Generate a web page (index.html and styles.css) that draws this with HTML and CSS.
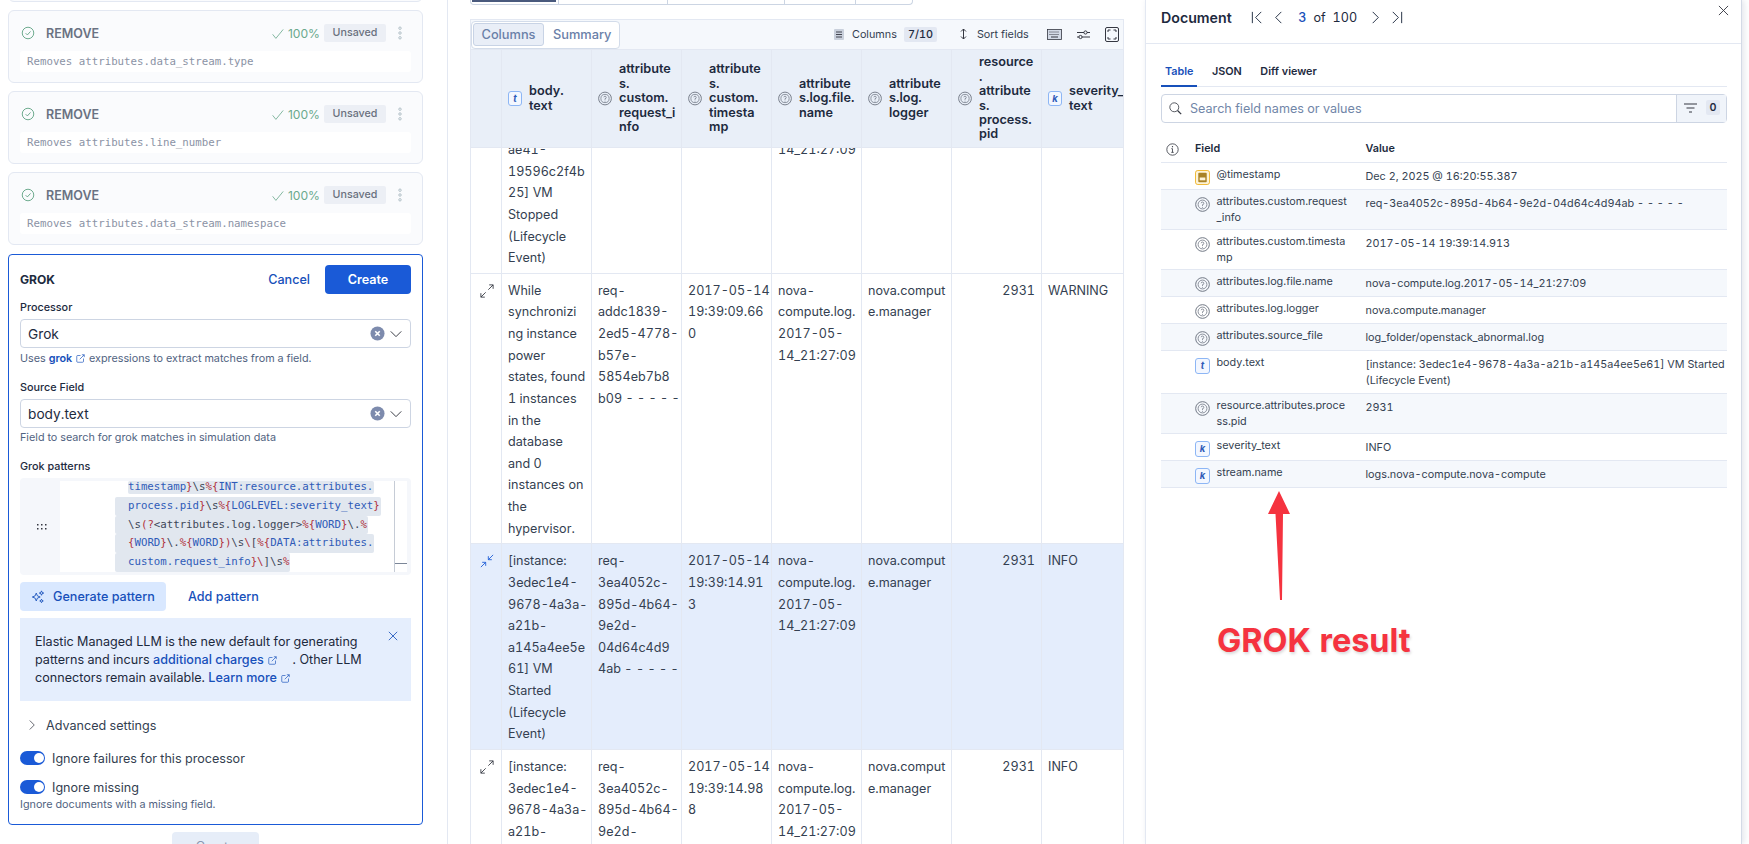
FILE: index.html
```html
<!DOCTYPE html>
<html lang="en">
<head>
<meta charset="utf-8">
<title>Processing</title>
<link rel="stylesheet" href="styles.css">
</head>
<body>
<svg class="defs" width="0" height="0" aria-hidden="true">
  <symbol id="i-ok" viewBox="0 0 16 16"><circle cx="8" cy="8" r="6.6" fill="none" stroke="currentColor"/><path d="M5.3 8.2l2 2 3.6-4" fill="none" stroke="currentColor"/></symbol>
  <symbol id="i-check" viewBox="0 0 16 16"><path d="M2 9l4 5L15 3" fill="none" stroke="currentColor"/></symbol>
  <symbol id="i-dots" viewBox="0 0 6 16"><circle cx="3" cy="2.5" r="1.4" fill="none" stroke="currentColor"/><circle cx="3" cy="8" r="1.4" fill="none" stroke="currentColor"/><circle cx="3" cy="13.5" r="1.4" fill="none" stroke="currentColor"/></symbol>
  <symbol id="i-clear" viewBox="0 0 16 16"><circle cx="8" cy="8" r="7.5" fill="#7d8bad"/><path d="M5.6 5.6l4.8 4.8M10.4 5.6l-4.8 4.8" stroke="#fff" stroke-width="1.7"/></symbol>
  <symbol id="i-down" viewBox="0 0 16 16"><path d="M2 5l6 6 6-6" fill="none" stroke="currentColor" stroke-width="1.1"/></symbol>
  <symbol id="i-ext" viewBox="0 0 12 12"><path d="M6 2H2.2A1.2 1.2 0 0 0 1 3.2v6.6A1.2 1.2 0 0 0 2.2 11h6.6A1.2 1.2 0 0 0 10 9.8V6M5 7l6-6M7.8 1H11v3.2" fill="none" stroke="currentColor" stroke-width=".9"/></symbol>
  <symbol id="i-x" viewBox="0 0 12 12"><path d="M1 1l10 10M11 1L1 11" fill="none" stroke="currentColor"/></symbol>
  <symbol id="i-unknown" viewBox="0 0 16 16"><circle cx="8" cy="8" r="7.3" fill="none" stroke="#69707d"/><circle cx="8" cy="8" r="4.7" fill="none" stroke="#69707d" stroke-width=".8"/><path d="M6.6 6.6A1.4 1.4 0 1 1 8 8.2v1.3M8 10.5v1" fill="none" stroke="#69707d" stroke-width=".8"/></symbol>
  <symbol id="i-date" viewBox="0 0 16 16"><rect x=".5" y=".5" width="15" height="15" rx="2.5" fill="#fdf3d8" stroke="#f0b429"/><rect x="3.5" y="3" width="9" height="10" rx="1" fill="#a98226"/><rect x="5" y="8" width="6" height="3" fill="#fdf3d8"/></symbol>
  <symbol id="i-expand" viewBox="0 0 16 16"><path d="M9.5 6.5L15 1M10.5 1H15v4.5M6.5 9.5L1 15M1 10.5V15h4.5" fill="none" stroke="currentColor"/></symbol>
  <symbol id="i-collapse" viewBox="0 0 16 16"><path d="M15 1L9.5 6.5M9.5 2.5v4h4M1 15l5.500-5.500M2.500 9.500h4v4" fill="none" stroke="currentColor"/></symbol>
</svg>
<div class="app">
  <aside class="left">
    <div class="card stub"></div>
    <section class="card">
      <div class="card-head">
        <svg class="ok"><use href="#i-ok"/></svg><strong class="card-title">REMOVE</strong>
        <svg class="tick"><use href="#i-check"/></svg><span class="pct">100%</span><span class="badge">Unsaved</span><svg class="dots"><use href="#i-dots"/></svg>
      </div>
      <div class="card-desc">Removes attributes.data_stream.type</div>
    </section>
    <section class="card">
      <div class="card-head">
        <svg class="ok"><use href="#i-ok"/></svg><strong class="card-title">REMOVE</strong>
        <svg class="tick"><use href="#i-check"/></svg><span class="pct">100%</span><span class="badge">Unsaved</span><svg class="dots"><use href="#i-dots"/></svg>
      </div>
      <div class="card-desc">Removes attributes.line_number</div>
    </section>
    <section class="card">
      <div class="card-head">
        <svg class="ok"><use href="#i-ok"/></svg><strong class="card-title">REMOVE</strong>
        <svg class="tick"><use href="#i-check"/></svg><span class="pct">100%</span><span class="badge">Unsaved</span><svg class="dots"><use href="#i-dots"/></svg>
      </div>
      <div class="card-desc">Removes attributes.data_stream.namespace</div>
    </section>

    <section class="editor">
      <div class="editor-head">
        <strong class="editor-title">GROK</strong>
        <a class="cancel">Cancel</a>
        <button class="create">Create</button>
      </div>
      <div class="label label-first">Processor</div>
      <div class="select"><span>Grok</span><svg class="clear"><use href="#i-clear"/></svg><svg class="down"><use href="#i-down"/></svg></div>
      <div class="help">Uses <a class="link-strong">grok</a> <svg class="ext"><use href="#i-ext"/></svg> expressions to extract matches from a field.</div>
      <div class="label label-next">Source Field</div>
      <div class="select"><span>body.text</span><svg class="clear"><use href="#i-clear"/></svg><svg class="down"><use href="#i-down"/></svg></div>
      <div class="help help-near">Field to search for grok matches in simulation data</div>
      <div class="label label-next">Grok patterns</div>
      <div class="pattern">
        <div class="handle">
          <svg width="10" height="6" viewBox="0 0 10 6"><g fill="#343741"><rect x="0" y="0" width="1.500" height="1.500"/><rect x="4" y="0" width="1.500" height="1.500"/><rect x="8" y="0" width="1.500" height="1.500"/><rect x="0" y="4" width="1.500" height="1.500"/><rect x="4" y="4" width="1.500" height="1.500"/><rect x="8" y="4" width="1.500" height="1.500"/></g></svg>
        </div>
        <div class="code">
          <div class="code-line first"><b>timestamp</b><i>}</i>\s<i>%{</i><b>INT:resource.attributes.</b></div>
          <div class="code-line"><b>process.pid</b><i>}</i>\s<i>%{</i><b>LOGLEVEL:severity_text</b><i>}</i></div>
          <div class="code-line">\s<i>(?</i>&lt;attributes.log.logger&gt;<i>%{</i><b>WORD</b><i>}</i>\.<i>%</i></div>
          <div class="code-line"><i>{</i><b>WORD</b><i>}</i>\.<i>%{</i><b>WORD</b><i>})</i>\s<i>\</i>[<i>%{</i><b>DATA:attributes.</b></div>
          <div class="code-line"><b>custom.request_info</b><i>}\</i>]\s<i>%</i></div>
        </div>
        <div class="code-scroll"><span class="code-thumb"></span></div>
      </div>
      <div class="actions">
        <button class="generate">
          <svg class="spark" viewBox="0 0 16 16"><path d="M6 3.500l1.300 3.200L10.500 8 7.300 9.300 6 12.500 4.700 9.300 1.500 8l3.200-1.300zM12 1l.7 1.800 1.800.7-1.800.7L12 6l-.7-1.800-1.800-.7 1.800-.7zM12 10.500l.6 1.400 1.400.6-1.400.6-.6 1.400-.6-1.400-1.400-.6 1.400-.6z" fill="none" stroke="currentColor"/></svg>
          Generate pattern
        </button>
        <a class="add">Add pattern</a>
      </div>
      <div class="callout">
        <p>Elastic Managed LLM is the new default for generating<br>patterns and incurs <a class="link">additional charges</a> <svg class="ext wide"><use href="#i-ext"/></svg> . Other LLM<br>connectors remain available. <a class="link">Learn more</a> <svg class="ext"><use href="#i-ext"/></svg></p>
        <svg class="callout-x"><use href="#i-x"/></svg>
      </div>
      <div class="advanced">
        <svg class="adv-chev" viewBox="0 0 16 16"><path d="M5 2l6 6-6 6" fill="none" stroke="currentColor"/></svg>
        Advanced settings
      </div>
      <div class="toggle-row"><span class="toggle"></span>Ignore failures for this processor</div>
      <div class="toggle-row second"><span class="toggle"></span>Ignore missing</div>
      <div class="help help-tight">Ignore documents with a missing field.</div>
    </section>
    <div class="next-wrap"><button class="next">Create</button></div>
  </aside>

  <main class="middle">
    <div class="steps">
      <span class="step active"></span><span class="step w109"></span><span class="step w117"></span><span class="step w71"></span><span class="step rest"></span>
    </div>
    <div class="toolbar">
      <div class="seg"><span class="seg-on">Columns</span><span class="seg-off">Summary</span></div>
      <div class="tools">
        <svg class="tool-ico" width="10" height="11" viewBox="0 0 10 11"><rect x="0" y="0" width="10" height="11" rx="1" fill="#c9d0dc"/><path d="M2 3h6M2 5.500h6M2 8h6" stroke="#343741" stroke-width=".9"/></svg>
        <span class="tool-text">Columns</span><span class="count">7/10</span>
        <svg class="tool-ico sort" width="7" height="12" viewBox="0 0 7 12"><path d="M3.500 1v10M1 3.500L3.500 1 6 3.500M1 8.500L3.500 11 6 8.500" fill="none" stroke="#343741"/></svg>
        <span class="tool-text">Sort fields</span>
        <svg class="tool-ico kb" width="15" height="11" viewBox="0 0 15 11"><rect x=".5" y=".5" width="14" height="10" fill="#d3dae6" stroke="#343741" stroke-width=".8"/><path d="M2.500 3h10M2.500 5.500h10" stroke="#343741" stroke-dasharray="1 1"/><path d="M4 8h7" stroke="#343741"/></svg>
        <svg class="tool-ico sl" width="13" height="11" viewBox="0 0 13 11"><path d="M0 3.500h7M10 3.500h3M0 8h2M5 8h8" stroke="#343741"/><circle cx="8.500" cy="3.500" r="1.600" fill="none" stroke="#343741"/><circle cx="3.500" cy="8" r="1.600" fill="none" stroke="#343741"/></svg>
        <svg class="tool-ico fs" width="14" height="15" viewBox="0 0 14 15"><rect x=".5" y=".5" width="13" height="14" rx="1.500" fill="none" stroke="#343741"/><path d="M3 5V3h2.500M8.500 3H11v2M11 10v2H8.500M5.500 12H3v-2" fill="none" stroke="#343741"/></svg>
      </div>
    </div>
    <div class="grid-head grid-cols">
      <div class="th"></div>
      <div class="th"><span class="tok">t</span><span>body.<br>text</span></div>
      <div class="th"><svg class="tok-u"><use href="#i-unknown"/></svg><span>attribute<br>s.<br>custom.<br>request_i<br>nfo</span></div>
      <div class="th"><svg class="tok-u"><use href="#i-unknown"/></svg><span>attribute<br>s.<br>custom.<br>timesta<br>mp</span></div>
      <div class="th"><svg class="tok-u"><use href="#i-unknown"/></svg><span>attribute<br>s.log.file.<br>name</span></div>
      <div class="th"><svg class="tok-u"><use href="#i-unknown"/></svg><span>attribute<br>s.log.<br>logger</span></div>
      <div class="th"><svg class="tok-u"><use href="#i-unknown"/></svg><span>resource<br>.<br>attribute<br>s.<br>process.<br>pid</span></div>
      <div class="th last"><span class="tok">k</span><span>severity_<br>text</span></div>
    </div>
    <div class="grid-body">
      <div class="row row-scrolled grid-cols">
        <div class="td"></div>
        <div class="td">ae41-<br>19596c2f4b<br>25] VM<br>Stopped<br>(Lifecycle<br>Event)</div>
        <div class="td"></div><div class="td"></div>
        <div class="td">14_21:27:09</div>
        <div class="td"></div><div class="td"></div><div class="td last"></div>
      </div>
      <div class="row grid-cols">
        <div class="td"><svg class="exp"><use href="#i-expand"/></svg></div>
        <div class="td">While<br>synchronizi<br>ng instance<br>power<br>states, found<br>1 instances<br>in the<br>database<br>and 0<br>instances on<br>the<br>hypervisor.</div>
        <div class="td">req-<br>addc1839-<br>2ed5-4778-<br>b57e-<br>5854eb7b8<br>b09 - - - - -</div>
        <div class="td">2017-05-14<br>19:39:09.66<br>0</div>
        <div class="td">nova-<br>compute.log.<br>2017-05-<br>14_21:27:09</div>
        <div class="td">nova.comput<br>e.manager</div>
        <div class="td num">2931</div>
        <div class="td last">WARNING</div>
      </div>
      <div class="row row-on grid-cols">
        <div class="td"><svg class="exp on"><use href="#i-collapse"/></svg></div>
        <div class="td">[instance:<br>3edec1e4-<br>9678-4a3a-<br>a21b-<br>a145a4ee5e<br>61] VM<br>Started<br>(Lifecycle<br>Event)</div>
        <div class="td">req-<br>3ea4052c-<br>895d-4b64-<br>9e2d-<br>04d64c4d9<br>4ab - - - - -</div>
        <div class="td">2017-05-14<br>19:39:14.91<br>3</div>
        <div class="td">nova-<br>compute.log.<br>2017-05-<br>14_21:27:09</div>
        <div class="td">nova.comput<br>e.manager</div>
        <div class="td num">2931</div>
        <div class="td last">INFO</div>
      </div>
      <div class="row grid-cols">
        <div class="td"><svg class="exp"><use href="#i-expand"/></svg></div>
        <div class="td">[instance:<br>3edec1e4-<br>9678-4a3a-<br>a21b-<br>a145a4ee5e</div>
        <div class="td">req-<br>3ea4052c-<br>895d-4b64-<br>9e2d-<br>04d64c4d9</div>
        <div class="td">2017-05-14<br>19:39:14.98<br>8</div>
        <div class="td">nova-<br>compute.log.<br>2017-05-<br>14_21:27:09</div>
        <div class="td">nova.comput<br>e.manager</div>
        <div class="td num">2931</div>
        <div class="td last">INFO</div>
      </div>
    </div>
  </main>

  <aside class="flyout">
    <header class="fly-head">
      <h2 class="fly-title">Document</h2>
      <svg class="pg" viewBox="0 0 16 16"><path d="M2.500 2v12M12 2L6 8l6 6" fill="none" stroke="currentColor"/></svg>
      <svg class="pg" viewBox="0 0 16 16"><path d="M11 2L5 8l6 6" fill="none" stroke="currentColor"/></svg>
      <span class="pg-now">3</span><span class="pg-of">of</span><span class="pg-total">100</span>
      <svg class="pg" viewBox="0 0 16 16"><path d="M5 2l6 6-6 6" fill="none" stroke="currentColor"/></svg>
      <svg class="pg" viewBox="0 0 16 16"><path d="M13.500 2v12M4 2l6 6-6 6" fill="none" stroke="currentColor"/></svg>
      <svg class="fly-x"><use href="#i-x"/></svg>
    </header>
    <div class="fly-body">
      <div class="tabs"><span class="tab tab-on">Table</span><span class="tab">JSON</span><span class="tab">Diff viewer</span></div>
      <div class="search">
        <svg class="search-ico" viewBox="0 0 16 16"><circle cx="6.500" cy="6.500" r="5.500" fill="none" stroke="#343741"/><path d="M10.500 10.500L15 15" stroke="#343741" stroke-width="1.500"/></svg>
        <span class="search-ph">Search field names or values</span>
        <div class="search-filter">
          <svg width="13" height="12" viewBox="0 0 13 12"><path d="M0 1h13M2.500 5h8M5 9h3" stroke="#343741"/></svg>
          <span class="zero">0</span>
        </div>
      </div>
      <div class="doc-head">
        <svg class="info" viewBox="0 0 16 16"><circle cx="8" cy="8" r="7" fill="none" stroke="#343741"/><path d="M8 7v4.500M6.500 11.500h3M6.500 7H8" fill="none" stroke="#343741"/><circle cx="8" cy="4.500" r=".8" fill="#343741"/></svg>
        <strong class="dh-field">Field</strong><strong class="dh-value">Value</strong>
      </div>
      <div class="doc-row"><div class="f"><svg class="ft"><use href="#i-date"/></svg><span>@timestamp</span></div><div class="v">Dec 2, 2025 @ 16:20:55.387</div></div>
      <div class="doc-row alt"><div class="f"><svg class="ft"><use href="#i-unknown"/></svg><span>attributes.custom.request<br>_info</span></div><div class="v">req-3ea4052c-895d-4b64-9e2d-04d64c4d94ab - - - - -</div></div>
      <div class="doc-row"><div class="f"><svg class="ft"><use href="#i-unknown"/></svg><span>attributes.custom.timesta<br>mp</span></div><div class="v">2017-05-14 19:39:14.913</div></div>
      <div class="doc-row alt"><div class="f"><svg class="ft"><use href="#i-unknown"/></svg><span>attributes.log.file.name</span></div><div class="v">nova-compute.log.2017-05-14_21:27:09</div></div>
      <div class="doc-row"><div class="f"><svg class="ft"><use href="#i-unknown"/></svg><span>attributes.log.logger</span></div><div class="v">nova.compute.manager</div></div>
      <div class="doc-row alt"><div class="f"><svg class="ft"><use href="#i-unknown"/></svg><span>attributes.source_file</span></div><div class="v">log_folder/openstack_abnormal.log</div></div>
      <div class="doc-row"><div class="f"><span class="tok tok-sm">t</span><span>body.text</span></div><div class="v">[instance: 3edec1e4-9678-4a3a-a21b-a145a4ee5e61] VM Started<br>(Lifecycle Event)</div></div>
      <div class="doc-row alt"><div class="f"><svg class="ft"><use href="#i-unknown"/></svg><span>resource.attributes.proce<br>ss.pid</span></div><div class="v">2931</div></div>
      <div class="doc-row"><div class="f"><span class="tok tok-sm">k</span><span>severity_text</span></div><div class="v">INFO</div></div>
      <div class="doc-row alt"><div class="f"><span class="tok tok-sm">k</span><span>stream.name</span></div><div class="v">logs.nova-compute.nova-compute</div></div>
    </div>
  </aside>

  <svg class="note-arrow" width="26" height="110" viewBox="0 0 26 110"><path d="M13 0L24 23H17L16 109H14L9.500 23H2Z" fill="#f5333f"/></svg>
  <div class="note-text">GROK result</div>
</div>
</body>
</html>
```
FILE: styles.css
```css
* { box-sizing: border-box; }
html, body { margin: 0; padding: 0; background: #fff; }
body { font-family: Inter, "Noto Sans", sans-serif; font-feature-settings: "tnum" 1; color: #1d2a3e; font-size: 12.600px; }
.defs { position: absolute; }
svg { display: block; flex: none; }
button { font-family: inherit; font-feature-settings: inherit; border: 0; padding: 0; }
a { color: #1750ba; }

.app { position: relative; display: flex; width: 1749px; height: 844px; overflow: hidden; }

/* Left column */
.left { width: 448px; flex: none; padding: 0 24px 0 8px; border-right: 1px solid #e3e8f2; }
.card { width: 415px; height: 73px; margin-bottom: 8px; padding: 13px 11px 0; background: #fafbfd; border: 1px solid #e3e8f2; border-radius: 6px; }
.stub { height: 20px; margin-top: -18px; padding: 0; }
.card-head { display: flex; align-items: center; height: 18px; color: #69707d; }
.ok { width: 14px; height: 14px; margin: 0 11px 0 1px; color: #5aa07f; }
.card-title { font-size: 12.500px; font-weight: 600; color: #6a7282; flex: 1; }
.tick { width: 13px; height: 13px; margin-right: 4px; color: #6aa98d; }
.pct { font-size: 12.100px; font-feature-settings: normal; color: #6aa98d; margin-right: 4px; }
.badge { width: 62px; height: 18px; line-height: 17px; text-align: center; font-size: 10.700px; font-weight: 500; background: #eceff5; color: #69707d; border-radius: 2px; }
.dots { width: 6px; height: 14px; margin: 0 8px 0 11px; color: #a8b8c0; }
.card-desc { height: 21px; margin-top: 9px; padding-left: 7px; line-height: 21px; font-family: "DejaVu Sans Mono", monospace; font-size: 10.750px; color: #8b93a5; background: #fff; border-radius: 3px; }

.editor { width: 415px; height: 571px; margin-top: 9px; padding: 10px 11px 0; border: 1px solid #1a5ad7; border-radius: 4px; }
.editor-head { display: flex; align-items: center; height: 29px; }
.editor-title { flex: 1; font-size: 12.100px; font-weight: 700; }
.cancel { font-size: 12.600px; font-weight: 500; margin-right: 15px; }
.create { width: 86px; height: 29px; background: #1a5ad7; color: #fff; font-size: 12.600px; font-weight: 600; border-radius: 4px; }
.label { font-size: 10.800px; font-weight: 500; line-height: 16px; color: #1d2a3e; }
.label-first { margin-top: 6px; }
.label-next { margin-top: 13px; }
.select { display: flex; align-items: center; height: 29px; margin-top: 3px; padding: 0 7px; border: 1px solid #cdd5e3; border-radius: 4px; font-size: 13.700px; }
.select span { flex: 1; }
.clear { width: 15px; height: 15px; margin-right: 4px; }
.down { width: 14px; height: 14px; color: #343741; }
.help { height: 16px; margin-top: 3px; font-size: 10.800px; line-height: 16px; color: #516381; white-space: nowrap; }
.help-near { margin-top: 2px; }
.help-tight { margin-top: 1px; }
.link-strong { font-weight: 600; }
.ext { display: inline-block; width: 9px; height: 9px; margin: 0 1px; color: #1750ba; vertical-align: -1px; }
.ext.wide { margin-right: 12px; }

.pattern { display: flex; height: 97px; margin-top: 3px; padding: 3px 4px; background: #f5f7fb; border-radius: 4px; }
.handle { width: 36px; display: flex; align-items: center; justify-content: center; }
.code { width: 334px; padding: 0 0 0 55px; background: #fff; font-family: "DejaVu Sans Mono", monospace; font-size: 10.720px; line-height: 18.700px; color: #3c4657; overflow: hidden; }
.code-line { width: fit-content; padding: 0 1px 0 13px; background: #e1e7ef; border-radius: 2px; white-space: pre; }
.code-line.first { margin: 0 0 3px 13px; padding-left: 0; height: 13px; line-height: 11px; }
.code b { font-weight: 400; color: #2f5bb8; }
.code i { font-style: normal; color: #b0303a; }
.code-scroll { position: relative; width: 13px; background: #fff; border-left: 1px solid #c6ccd6; }
.code-thumb { position: absolute; left: 0; right: 0; bottom: 8px; height: 1px; background: #7b8698; }

.actions { display: flex; align-items: center; margin-top: 7px; }
.generate { display: flex; align-items: center; width: 146px; height: 29px; padding-left: 11px; gap: 8px; background: #d9e8ff; color: #1750ba; font-size: 12.600px; font-weight: 500; border-radius: 4px; }
.spark { width: 14px; height: 14px; }
.add { margin-left: 22px; font-size: 12.600px; font-weight: 500; }
.callout { position: relative; height: 83px; margin-top: 7px; padding: 15px 15px 0; background: #e5eefd; }
.callout p { margin: 0; font-size: 12.600px; line-height: 18px; color: #1d2a3e; white-space: nowrap; }
.link { font-weight: 500; }
.callout-x { position: absolute; top: 13px; right: 13px; width: 10px; height: 10px; color: #1750ba; }
.advanced { display: flex; align-items: center; height: 20px; margin-top: 14px; padding-left: 6px; font-size: 12.600px; color: #343f51; }
.adv-chev { width: 12px; height: 12px; margin-right: 8px; color: #343741; }
.toggle-row { display: flex; align-items: center; height: 18px; margin-top: 14px; font-size: 12.600px; color: #343f51; }
.toggle-row.second { margin-top: 11px; }
.toggle { position: relative; width: 25px; height: 14px; margin-right: 7px; background: #1a5ad7; border-radius: 7px; }
.toggle::after { content: ""; position: absolute; top: 2px; right: 1.500px; width: 10px; height: 10px; background: #fff; border-radius: 50%; }
.next-wrap { display: flex; justify-content: center; margin-top: 7px; width: 415px; }
.next { width: 87px; height: 29px; background: #e6edf8; color: #8a97b0; font-size: 12.600px; border-radius: 4px; }

/* Middle */
.middle { width: 697px; flex: none; padding: 0 0 0 22px; }
.steps { display: flex; width: 443px; height: 5px; border: 1px solid #ccd5e3; border-top: 0; border-radius: 0 0 4px 4px; }
.step { height: 100%; border-right: 1px solid #ccd5e3; }
.step.active { width: 88px; position: relative; }
.step.active::before { content: ""; position: absolute; left: 1px; right: 2px; top: 0; height: 2px; background: #4a5a7d; }
.w109 { width: 109px; }
.w117 { width: 117px; }
.w71 { width: 71px; }
.step.rest { flex: 1; border-right: 0; }
.toolbar { display: flex; align-items: center; width: 654px; height: 30px; margin-top: 14px; background: #f5f8fc; border: 1px solid #e3e8f2; border-bottom: 0; }
.seg { display: flex; align-items: center; width: 149px; height: 28px; padding: 0 1px; background: #fff; border: 1px solid #d3dcea; border-radius: 4px; font-size: 12.800px; font-weight: 500; color: #6a80a8; white-space: nowrap; }
.seg-on { width: 71px; height: 23px; line-height: 21px; text-align: center; background: #e9eef7; border: 1px solid #c8d3e5; border-radius: 3px; }
.seg-off { margin-left: 9px; }
.tools { display: flex; align-items: center; flex: 1; padding: 0 0 1px 214px; }
.tool-text { font-size: 10.800px; color: #343f51; margin-left: 8px; white-space: nowrap; }
.count { width: 33px; height: 15px; margin-left: 7px; line-height: 15px; text-align: center; font-size: 10.800px; font-weight: 500; background: #e3e8f2; border-radius: 2px; }
.sort { margin-left: 23px; }
.sort + .tool-text { margin-left: 10px; }
.kb { margin-left: 18px; }
.sl { margin-left: 15px; }
.fs { margin-left: 15px; }

.grid-cols { display: grid; grid-template-columns: 31px 90px 90px 90px 90px 90px 90px 81px; width: 654px; }
.grid-head { height: 99px; background: #e9eff8; border: 1px solid #e3e8f2; }
.th { display: flex; align-items: center; gap: 7px; padding-left: 6px; border-right: 1px solid #e3e8f2; font-size: 12.700px; font-weight: 600; line-height: 14.400px; white-space: nowrap; overflow: hidden; }
.th.last { border-right: 0; }
.tok { display: flex; align-items: center; justify-content: center; flex: none; width: 14px; height: 15px; background: #f3f7ff; border: 1px solid #8db6f5; border-radius: 3px; font-style: italic; font-weight: 700; font-size: 9.500px; line-height: 1; color: #2f5bb8; }
.tok-u { width: 14px; height: 15px; }
.grid-body { width: 654px; height: 696px; overflow: hidden; }
.row { border-bottom: 1px solid #e3e8f2; border-left: 1px solid #e3e8f2; border-right: 1px solid #e3e8f2; }
.row-scrolled { margin-top: -15px; }
.row-on { background: #e4edfc; }
.td { padding: 6px 4px 4px 6px; border-right: 1px solid #e3e8f2; font-size: 12.600px; line-height: 21.620px; color: #343f51; white-space: nowrap; overflow: hidden; }
.td.last { border-right: 0; }
.td.num { text-align: right; padding-right: 6px; }
.exp { width: 14px; height: 14px; margin: 4px 0 0 3px; color: #343741; }
.exp.on { color: #1a5ad7; }

/* Flyout */
.flyout { width: 597px; flex: none; border-left: 1px solid #e3e8f2; border-right: 1px solid #d3dae6; box-shadow: 2px 0 6px rgba(60, 80, 120, .15); background: #fff; }
.fly-head { position: relative; display: flex; align-items: center; height: 44px; padding: 0 0 8px 15px; border-bottom: 1px solid #e3e8f2; }
.fly-title { margin: 0 18.500px 0 0; font-size: 14.200px; font-weight: 600; }
.pg { width: 15px; height: 15px; margin-right: 6px; color: #1d2a3e; }
.pg-now { margin-left: 6px; font-size: 12.600px; color: #1750ba; font-weight: 500; }
.pg-of { margin-left: 7px; font-size: 12.600px; }
.pg-total { margin: 0 11px 0 7px; font-size: 12.600px; }
.fly-x { position: absolute; top: 5px; right: 12px; width: 11px; height: 11px; color: #343741; }
.fly-body { padding: 0 14px 0 15px; }
.tabs { display: flex; height: 43px; padding-top: 18px; border-bottom: 1px solid #e3e8f2; }
.tab { height: 25px; margin-right: 18.700px; font-size: 10.800px; font-weight: 600; line-height: 19px; }
.tab-on { color: #1750ba; border-bottom: 2px solid #1750ba; margin-right: 14.400px; padding: 0 4px; }
.search { display: flex; align-items: center; height: 29px; margin-top: 7px; padding-left: 7px; border: 1px solid #cdd5e3; border-radius: 4px; }
.search-ico { width: 13px; height: 13px; }
.search-ph { flex: 1; margin-left: 8px; font-size: 12.600px; color: #7186a8; }
.search-filter { display: flex; align-items: center; gap: 9px; width: 50px; height: 100%; padding-left: 7px; background: #f0f4fa; border-left: 1px solid #cdd5e3; }
.zero { width: 14px; height: 15px; line-height: 15px; text-align: center; font-size: 10.800px; font-weight: 600; background: #e3e8f2; border-radius: 2px; margin-top: -3px; }
.doc-head { position: relative; display: flex; align-items: center; height: 40px; padding: 11px 0 0 34px; border-bottom: 1px solid #e3e8f2; font-size: 10.800px; }
.info { position: absolute; left: 5px; top: 20px; width: 13px; height: 13px; }
.dh-field { width: 170.500px; font-weight: 600; }
.dh-value { font-weight: 600; }
.doc-row { display: grid; grid-template-columns: 34px 170.500px 1fr; border-bottom: 1px solid #e3e8f2; font-size: 10.800px; line-height: 16px; color: #343f51; }
.doc-row.alt { background: #f5f8fc; }
.f { grid-column: 2; display: flex; gap: 6.500px; padding: 4px 0 3px; white-space: nowrap; }
.v { padding: 6px 0 4px; white-space: nowrap; }
.ft { width: 15px; height: 15px; margin-top: 3px; }
.tok-sm { width: 15px; height: 16px; margin-top: 3px; }

/* Annotation on top of the screenshot */
.note-arrow { position: absolute; left: 1266px; top: 491px; }
.note-text { position: absolute; left: 1217px; top: 621px; font-size: 32.400px; font-weight: 700; line-height: 40px; color: #f5333f; text-shadow: 1px 2px 3px rgba(0, 0, 0, .15); white-space: nowrap; }
```
